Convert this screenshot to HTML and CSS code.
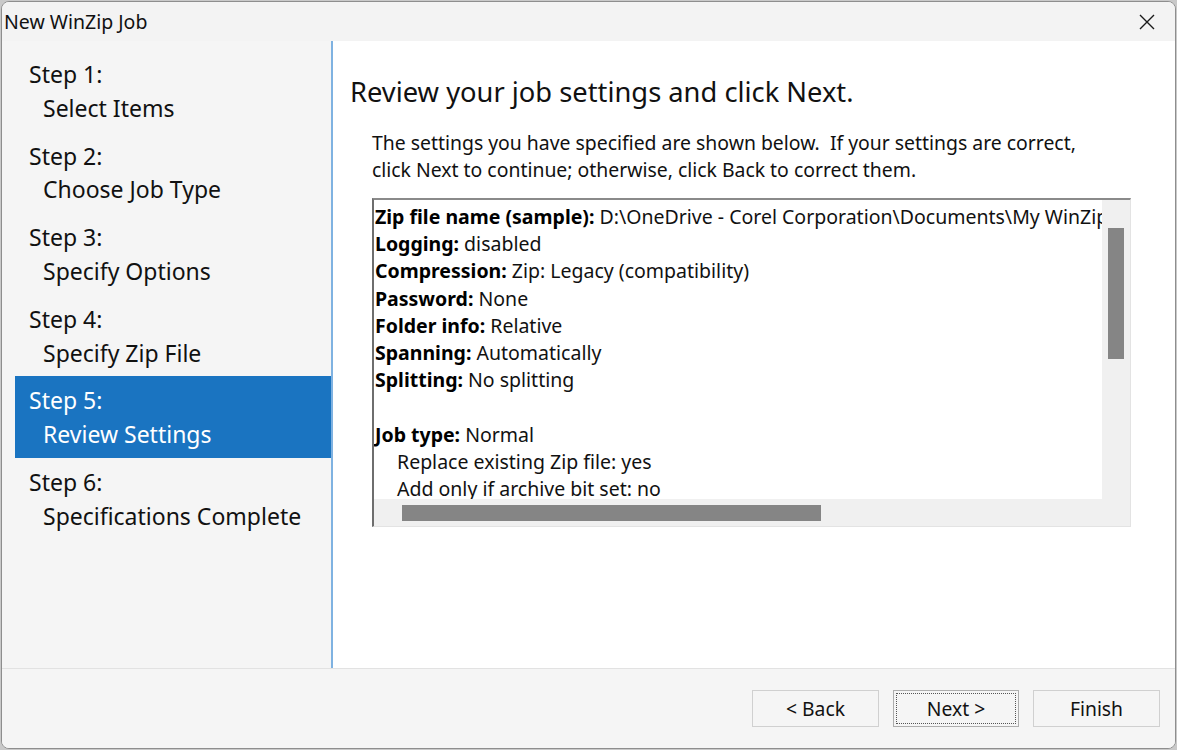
FILE: index.html
```html
<!DOCTYPE html>
<html>
<head>
<meta charset="utf-8">
<link rel="stylesheet" href="styles.css">
</head>
<body>
<div class="window">
  <div class="titlebar">
    <span class="title">New WinZip Job</span>
    <svg class="close" width="16" height="16" viewBox="0 0 16 16"><path d="M1 1L15 15M15 1L1 15" stroke="#1a1a1a" stroke-width="1.4" fill="none"/></svg>
  </div>
  <div class="main">
    <div class="steps">
      <div class="step"><div class="num">Step 1:</div><div class="name">Select Items</div></div>
      <div class="step"><div class="num">Step 2:</div><div class="name">Choose Job Type</div></div>
      <div class="step"><div class="num">Step 3:</div><div class="name">Specify Options</div></div>
      <div class="step"><div class="num">Step 4:</div><div class="name">Specify Zip File</div></div>
      <div class="step active"><div class="num">Step 5:</div><div class="name">Review Settings</div></div>
      <div class="step"><div class="num">Step 6:</div><div class="name">Specifications Complete</div></div>
    </div>
    <div class="content">
      <h1 class="heading">Review your job settings and click Next.</h1>
      <p class="desc">The settings you have specified are shown below.&nbsp; If your settings are correct,<br>click Next to continue; otherwise, click Back to correct them.</p>
      <div class="listbox">
        <div class="list-area">
          <div class="lines">
            <div class="line"><b>Zip file name (sample):</b> D:\OneDrive - Corel Corporation\Documents\My WinZip Files\Job.zip</div>
            <div class="line"><b>Logging:</b> disabled</div>
            <div class="line"><b>Compression:</b> Zip: Legacy (compatibility)</div>
            <div class="line"><b>Password:</b> None</div>
            <div class="line"><b>Folder info:</b> Relative</div>
            <div class="line"><b>Spanning:</b> Automatically</div>
            <div class="line"><b>Splitting:</b> No splitting</div>
            <div class="line blank">&nbsp;</div>
            <div class="line"><b>Job type:</b> Normal</div>
            <div class="line sub">Replace existing Zip file: yes</div>
            <div class="line sub">Add only if archive bit set: no</div>
          </div>
          <div class="vscroll"><div class="vthumb"></div></div>
        </div>
        <div class="hscroll"><div class="hthumb"></div></div>
      </div>
    </div>
  </div>
  <div class="footer">
    <button class="btn">&lt; Back</button>
    <button class="btn focused"><span class="focus-ring">Next &gt;</span></button>
    <button class="btn">Finish</button>
  </div>
</div>
</body>
</html>
```
FILE: styles.css
```css
* { box-sizing: border-box; }
html, body {
  margin: 0;
  padding: 0;
}
body {
  background: #c9c9c9;
  font-family: "Noto Sans", "Open Sans", sans-serif;
  color: #000;
  width: 1177px;
  height: 750px;
  overflow: hidden;
}
.window {
  margin: 1px 0 0 1px;
  width: 1175px;
  height: 748px;
  border: 1px solid #8e8e8e;
  border-radius: 8px;
  overflow: hidden;
  background: #f5f5f5;
  display: flex;
  flex-direction: column;
}
.titlebar {
  height: 39px;
  background: #f3f3f3;
  display: flex;
  align-items: center;
  justify-content: space-between;
  padding: 0 20px 0 2px;
  flex: none;
}
.title {
  font-size: 19.5px;
  color: #111;
}
.close { display: block; }
.main {
  flex: 1;
  display: flex;
  min-height: 0;
}
.steps {
  width: 331px;
  flex: none;
  background: #f5f5f5;
  border-right: 2px solid #7fb2e1;
  padding: 9px 0 0 13px;
  display: flex;
  flex-direction: column;
}
.step {
  height: 81.6px;
  flex: none;
  padding: 8px 0 0 14px;
  font-size: 23px;
  line-height: 33.8px;
  color: #111;
}
.step .name { padding-left: 14px; }
.step.active {
  background: #1a74c1;
  color: #fff;
}
.content {
  flex: 1;
  background: #fff;
  padding: 0 0 0 17px;
}
.heading {
  margin: 33px 0 0 0;
  font-weight: normal;
  font-size: 27.3px;
  line-height: 36px;
  color: #111;
}
.desc {
  margin: 19px 0 0 22px;
  font-size: 19.4px;
  line-height: 27px;
  color: #111;
}
.listbox {
  margin: 15px 0 0 22px;
  width: 759px;
  height: 329px;
  border-top: 2px solid #8a8a8a;
  border-left: 2px solid #6e6e6e;
  border-right: 1px solid #e3e3e3;
  border-bottom: 1px solid #e3e3e3;
  display: flex;
  flex-direction: column;
  background: #fff;
}
.list-area {
  flex: 1;
  display: flex;
  min-height: 0;
}
.lines {
  flex: 1;
  overflow: hidden;
  padding: 3px 0 0 1px;
  font-size: 19.5px;
  line-height: 27.2px;
  white-space: nowrap;
  color: #111;
}
.line b { font-weight: bold; color: #000; }
.line.sub { padding-left: 22px; }
.vscroll {
  width: 28px;
  flex: none;
  background: #f0f0f0;
  padding: 28px 6px 0 6px;
}
.vthumb {
  width: 16px;
  height: 131px;
  background: #858585;
}
.hscroll {
  height: 27px;
  flex: none;
  background: #f0f0f0;
  display: flex;
  align-items: center;
  padding-left: 28px;
}
.hthumb {
  width: 419px;
  height: 16px;
  background: #858585;
}
.footer {
  height: 80px;
  flex: none;
  border-top: 1px solid #e2e2e2;
  background: #f5f5f5;
  display: flex;
  justify-content: flex-end;
  align-items: flex-start;
  gap: 14px;
  padding: 21px 15px 0 0;
}
.btn {
  width: 127px;
  height: 37px;
  border: 1px solid #d0d0d0;
  background: #f5f5f5;
  font-family: "Noto Sans", "Open Sans", sans-serif;
  font-size: 19.3px;
  color: #111;
  padding: 0;
  display: flex;
  align-items: center;
  justify-content: center;
}
.btn.focused {
  width: 126px;
  border-color: #adadad;
  padding: 2px;
}
.focus-ring {
  width: 100%;
  height: 100%;
  border: 1px dotted #555;
  display: flex;
  align-items: center;
  justify-content: center;
}
```
